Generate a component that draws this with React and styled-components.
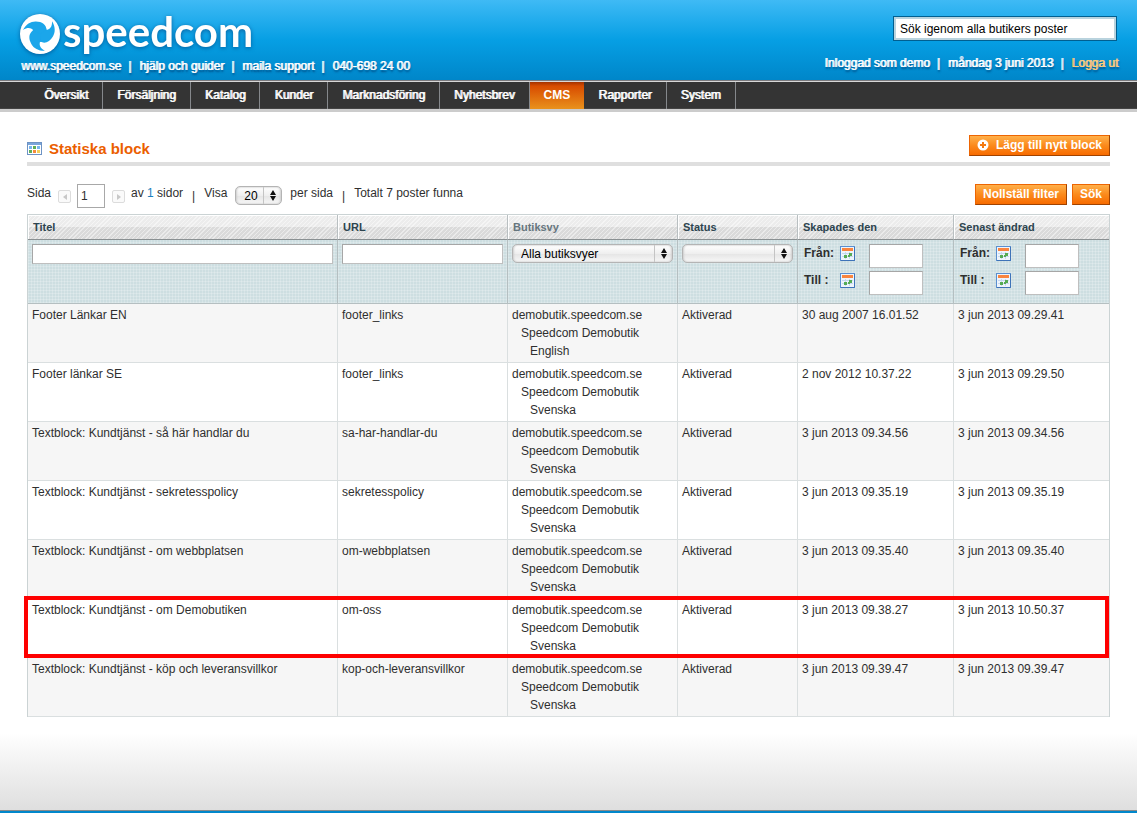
import React from 'react';
import styled, { createGlobalStyle, css } from 'styled-components';

const Global = createGlobalStyle`
  *, *::before, *::after { box-sizing: border-box; }
  body { margin: 0; background: #fff; color: #2f2f2f; font: 12px/18px "Liberation Sans", Arial, sans-serif; }
  input, select, button { font: inherit; color: inherit; margin: 0; }
  a { color: inherit; text-decoration: none; }
`;

const Page = styled.div`
  min-height: 100vh;
  display: flex;
  flex-direction: column;
`;

const Header = styled.header`
  display: flex;
  justify-content: space-between;
  height: 80px;
  padding: 10px 19px 0 19px;
  background: linear-gradient(#3fbaf5, #069fe4 50%, #0086c9);
  color: #fff;
  text-shadow: 1px 0 0 currentColor, 1px 2px 2px rgba(0, 40, 90, 0.7);
`;

const Brand = styled.a`
  display: flex;
  align-items: center;
  height: 47px;
  filter: drop-shadow(0 1px 2px rgba(0, 50, 110, 0.6));
  svg { display: block; flex: none; }
`;

const BrandName = styled.span`
  margin-left: 2px;
  font: 700 42px/42px Lato, sans-serif;
  padding-bottom: 6px;
  text-shadow: none;
`;

const HeaderLinks = styled.div`
  display: flex;
  padding-left: 2px;
  line-height: 18px;
`;

const Bar = styled.span`
  padding: 0 8px 0 7px;
`;

const Account = styled.div`
  display: flex;
  flex-direction: column;
  align-items: flex-end;
  padding-top: 6px;
`;

const GlobalSearch = styled.input`
  width: 224px;
  height: 25px;
  margin-right: 1px;
  padding: 0 6px;
  border: 1px solid #005f90;
  box-shadow: inset 0 0 0 2px #b9d3de;
  background: #fff;
  color: #000;
`;

const AccountLine = styled.div`
  display: flex;
  margin-top: 13px;
`;

const Logout = styled.a`
  color: #ffcb7d;
`;

const Nav = styled.nav`
  display: flex;
  height: 32px;
  padding-left: 30px;
  border-top: 1px solid #7b7b7f;
  border-bottom: 3px solid #ccc;
  background: #343434;
  box-shadow: inset 0 1px #d8d8d8, inset 0 -1px #444;
`;

const NavLink = styled.a`
  margin-top: 1px;
  padding: 4px 14px 0;
  border-right: 1px solid #85888c;
  color: #fff;
  text-shadow: 1px 0 0 currentColor;
  ${(p) => p.$active && css`
    border-right: 0;
    background: linear-gradient(#a33200, #d84c00 15%, #e9921c);
    font-weight: 700;
    text-shadow: none;
  `}
`;

const Main = styled.main`
  padding: 23px 27px 0;
`;

const TitleBar = styled.div`
  display: flex;
  justify-content: space-between;
  align-items: flex-start;
  height: 31px;
  border-bottom: 4px solid #dfdfdf;
`;

const Title = styled.h1`
  display: flex;
  align-items: center;
  gap: 7px;
  margin: 5px 0 0;
  color: #eb5e00;
  font-size: 15px;
  line-height: 18px;
  svg { margin-bottom: 2px; }
`;

const Button = styled.button`
  display: flex;
  align-items: center;
  gap: 7px;
  height: 21px;
  padding: 0 7px 2px;
  border: 1px solid;
  border-color: #ed6502 #a04300 #a04300 #ed6502;
  background: linear-gradient(#ffb04a, #fb8a1c 50%, #f76b00);
  color: #fff;
  font-weight: 700;
  white-space: nowrap;
  cursor: pointer;
`;

const Toolbar = styled.div`
  display: flex;
  justify-content: space-between;
  align-items: flex-start;
  height: 30px;
  margin-top: 18px;
`;

const Pager = styled.div`
  display: flex;
  align-items: flex-start;
  b { color: #1b7fbd; font-weight: 400; }
`;

const Step = styled.button`
  display: grid;
  place-items: center;
  width: 13px;
  height: 13px;
  margin: 6px 6px 0 7px;
  padding: 0;
  border: 1px solid #dcdcdc;
  border-radius: 2px;
  background: #fafafa;
`;

const PageInput = styled.input`
  width: 28px;
  height: 24px;
  padding: 0 3px;
  border: 1px solid #a8a8a8;
  background: #fff;
`;

const Divider = styled.span`
  padding: 3px 9px 0;
`;

const Actions = styled.div`
  display: flex;
  gap: 5px;
`;

const SelectFrame = styled.span`
  position: relative;
  display: block;
  width: ${(p) => (p.$compact ? '47px' : '100%')};
  height: 19px;
  margin: ${(p) => (p.$compact ? '2px 8px 0' : '0')};
  svg { position: absolute; right: 6px; top: 4px; pointer-events: none; }
`;

const Select = styled.select`
  display: block;
  width: 100%;
  height: 19px;
  padding: 0 20px 1px 8px;
  appearance: none;
  border: 1px solid #b4b4b4;
  border-radius: 5px;
  background:
    linear-gradient(#c4c4c4, #c4c4c4) right 17px top / 1px 100% no-repeat,
    linear-gradient(#fff, #efefef 50%, #e6e6e6 55%, #f8f8f8);
  box-shadow: inset 1px 0 2px #cfcfcf, inset -1px 0 2px #cfcfcf;
  color: #000;
`;

const Grid = styled.table`
  width: 100%;
  table-layout: fixed;
  border-collapse: separate;
  border-spacing: 0;
  border: solid #cbd3d4;
  border-width: 1px 1px 0;
`;

const Column = styled.col`
  width: ${(p) => p.$width}px;
`;

const HeadCell = styled.th`
  height: 25px;
  padding: 0 5px;
  border-right: 1px solid #b9bfc1;
  border-bottom: 1px solid #8a9092;
  background:
    repeating-linear-gradient(135deg, rgba(255, 255, 255, 0.45) 0 1px, transparent 1px 3px),
    linear-gradient(#ececec 48%, #dadada 48%);
  box-shadow: inset 1px 1px #fff;
  color: ${(p) => (p.$muted ? '#67767e' : '#2d444f')};
  font-size: 11px;
  text-align: left;
  &:last-child { border-right: 0; }
`;

const FilterCell = styled.td`
  height: 64px;
  padding: 4px;
  border-right: 1px solid #b5bfc1;
  border-bottom: 1px solid #b5bfc1;
  background:
    repeating-linear-gradient(0deg, rgba(255, 255, 255, 0.2) 0 1px, transparent 1px 3px),
    repeating-linear-gradient(90deg, rgba(255, 255, 255, 0.2) 0 1px, transparent 1px 3px),
    #cddee1;
  vertical-align: top;
  &:last-child { border-right: 0; }
`;

const FilterInput = styled.input`
  display: block;
  width: ${(p) => (p.$date ? '54px' : '100%')};
  height: ${(p) => (p.$date ? '24px' : '20px')};
  padding: 0 3px;
  border: 1px solid;
  border-color: #a6a6a6 #bfbfbf #bfbfbf #a6a6a6;
  background: #fff;
`;

const DateRow = styled.div`
  display: grid;
  grid-template-columns: 36px 29px 54px;
  align-items: start;
  padding-left: 2px;
  margin-bottom: 3px;
`;

const DateLabel = styled.label`
  font-weight: 700;
  white-space: nowrap;
`;

const IconButton = styled.button`
  width: 15px;
  height: 15px;
  margin-top: 2px;
  padding: 0;
  border: 0;
  background: none;
  svg { display: block; }
`;

const Row = styled.tr`
  position: relative;
  background: ${(p) => (p.$odd ? '#f6f6f6' : '#fff')};
  ${(p) => p.$marked && css`
    td:first-child::after {
      content: '';
      position: absolute;
      z-index: 1;
      inset: -3px 0 0 -4px;
      border: 4px solid #fe0000;
      pointer-events: none;
    }
  `}
`;

const Cell = styled.td`
  padding: 2px 4px;
  border-right: 1px solid #dadfe0;
  border-bottom: 1px solid #dadfe0;
  vertical-align: top;
  &:last-child { border-right: 0; }
`;

const StoreLine = styled.div`
  padding-left: ${(p) => p.$level * 9}px;
`;

const Footer = styled.footer`
  flex: 1;
  margin-top: 16px;
  min-height: 78px;
  background: linear-gradient(#fff, #dedede);
  border-bottom: 2px solid #0087cb;
  box-shadow: inset 0 -1px #8a8a8a;
`;

const LogoMark = () => (
  <svg width="42" height="42" viewBox="-21 -21 42 42" aria-hidden="true">
    <circle r="20" fill="#fff" />
    <g fill="#1ba6ea">
      <circle r="8" />
      {[-10, 110, 230].map((turn) => (
        <path
          key={turn}
          transform={`rotate(${turn})`}
          d="M-6 -5C-8 -8 -11 -9 -16 -7C-12 -12 -7 -14 -2 -13C4 -12 8 -8 7 -3L0 0Z"
        />
      ))}
    </g>
  </svg>
);

const GridIcon = () => (
  <svg width="15" height="13" viewBox="0 0 15 13" aria-hidden="true">
    <rect x="0.5" y="0.5" width="14" height="12" fill="#fff" stroke="#6d93c4" />
    <path d="M1 1h13v2H1z" fill="#7aa5da" />
    <path d="M2 4h3v3H2zM10 4h3v3h-3z" fill="#78b6ee" />
    <path d="M6 4h3v3H6zM2 8h3v3H2z" fill="#5fae57" />
    <path d="M6 8h3v3H6z" fill="#f58b3c" />
    <path d="M10 8h3v3h-3z" fill="#f3cf5a" />
  </svg>
);

const PlusIcon = () => (
  <svg width="12" height="12" viewBox="0 0 12 12" aria-hidden="true">
    <circle cx="6" cy="6" r="5.5" fill="#fff" />
    <path d="M6 3v6M3 6h6" stroke="#f47a10" strokeWidth="2" />
  </svg>
);

const CalendarIcon = () => (
  <svg width="15" height="15" viewBox="0 0 15 15" aria-hidden="true">
    <rect x="0.5" y="0.5" width="14" height="14" fill="#eef4fc" stroke="#5a8fd0" />
    <path d="M1 14.5h13.5V1" fill="none" stroke="#3f73b8" />
    <path d="M2 2h11v3H2z" fill="#f98540" />
    <path d="M2 7.5h11M2 10.5h11M5.5 6v7M9.5 6v7" stroke="#c6d8ef" />
    <path d="M9 7h3v3H9zM4 9h3v3H4zM8 9h2v2H8z" fill="#55ab55" />
  </svg>
);

const Arrows = () => (
  <svg width="6" height="11" viewBox="0 0 6 11" aria-hidden="true">
    <path d="M3 0l3 5H0zM3 11L0 6h6z" fill="#111" />
  </svg>
);

const Chevron = ({ next }) => (
  <svg width="4" height="6" viewBox="0 0 4 6" aria-hidden="true">
    <path d={next ? 'M0 0l4 3-4 3z' : 'M4 0L0 3l4 3z'} fill="#c8c8c8" />
  </svg>
);

const nav = ['Översikt', 'Försäljning', 'Katalog', 'Kunder', 'Marknadsföring', 'Nyhetsbrev', 'CMS', 'Rapporter', 'System'];

const rows = [
  ['Footer Länkar EN', 'footer_links', 'English', '30 aug 2007 16.01.52', '3 jun 2013 09.29.41'],
  ['Footer länkar SE', 'footer_links', 'Svenska', '2 nov 2012 10.37.22', '3 jun 2013 09.29.50'],
  ['Textblock: Kundtjänst - så här handlar du', 'sa-har-handlar-du', 'Svenska', '3 jun 2013 09.34.56', '3 jun 2013 09.34.56'],
  ['Textblock: Kundtjänst - sekretesspolicy', 'sekretesspolicy', 'Svenska', '3 jun 2013 09.35.19', '3 jun 2013 09.35.19'],
  ['Textblock: Kundtjänst - om webbplatsen', 'om-webbplatsen', 'Svenska', '3 jun 2013 09.35.40', '3 jun 2013 09.35.40'],
  ['Textblock: Kundtjänst - om Demobutiken', 'om-oss', 'Svenska', '3 jun 2013 09.38.27', '3 jun 2013 10.50.37'],
  ['Textblock: Kundtjänst - köp och leveransvillkor', 'kop-och-leveransvillkor', 'Svenska', '3 jun 2013 09.39.47', '3 jun 2013 09.39.47'],
];

const DateFilter = ({ name }) => (
  <>
    {[['from', 'Från:'], ['to', 'Till :']].map(([key, text]) => (
      <DateRow key={key}>
        <DateLabel htmlFor={`${name}-${key}`}>{text}</DateLabel>
        <IconButton type="button" aria-label="Välj datum"><CalendarIcon /></IconButton>
        <FilterInput $date id={`${name}-${key}`} />
      </DateRow>
    ))}
  </>
);

export default function App() {
  return (
    <Page>
      <Global />
      <Header>
        <div>
          <Brand href="#"><LogoMark /><BrandName>speedcom</BrandName></Brand>
          <HeaderLinks>
            <a href="#">www.speedcom.se</a><Bar>|</Bar>
            <a href="#">hjälp och guider</a><Bar>|</Bar>
            <a href="#">maila support</a><Bar>|</Bar>
            <span>040-698 24 00</span>
          </HeaderLinks>
        </div>
        <Account>
          <GlobalSearch aria-label="Sök" defaultValue="Sök igenom alla butikers poster" />
          <AccountLine>
            <span>Inloggad som demo</span><Bar>|</Bar>
            <span>måndag 3 juni 2013</span><Bar>|</Bar>
            <Logout href="#">Logga ut</Logout>
          </AccountLine>
        </Account>
      </Header>
      <Nav>
        {nav.map((n) => <NavLink key={n} href="#" $active={n === 'CMS'}>{n}</NavLink>)}
      </Nav>
      <Main>
        <TitleBar>
          <Title><GridIcon />Statiska block</Title>
          <Button type="button"><PlusIcon />Lägg till nytt block</Button>
        </TitleBar>
        <Toolbar>
          <Pager>
            <label htmlFor="page">Sida</label>
            <Step type="button" aria-label="Föregående"><Chevron /></Step>
            <PageInput id="page" defaultValue="1" />
            <Step type="button" aria-label="Nästa"><Chevron next /></Step>
            <span>av <b>1</b> sidor</span>
            <Divider>|</Divider>
            <label htmlFor="limit">Visa</label>
            <SelectFrame $compact>
              <Select id="limit"><option>20</option></Select>
              <Arrows />
            </SelectFrame>
            <span>per sida</span>
            <Divider>|</Divider>
            <span>Totalt 7 poster funna</span>
          </Pager>
          <Actions>
            <Button type="button">Nollställ filter</Button>
            <Button type="button">Sök</Button>
          </Actions>
        </Toolbar>
        <Grid>
          <colgroup>
            <col />
            <Column $width={170} />
            <Column $width={170} />
            <Column $width={120} />
            <Column $width={156} />
            <Column $width={155} />
          </colgroup>
          <thead>
            <tr>
              <HeadCell>Titel</HeadCell>
              <HeadCell>URL</HeadCell>
              <HeadCell $muted>Butiksvy</HeadCell>
              <HeadCell>Status</HeadCell>
              <HeadCell>Skapades den</HeadCell>
              <HeadCell>Senast ändrad</HeadCell>
            </tr>
            <tr>
              <FilterCell><FilterInput aria-label="Titel" /></FilterCell>
              <FilterCell><FilterInput aria-label="URL" /></FilterCell>
              <FilterCell>
                <SelectFrame>
                  <Select aria-label="Butiksvy"><option>Alla butiksvyer</option></Select>
                  <Arrows />
                </SelectFrame>
              </FilterCell>
              <FilterCell>
                <SelectFrame>
                  <Select aria-label="Status"><option></option></Select>
                  <Arrows />
                </SelectFrame>
              </FilterCell>
              <FilterCell><DateFilter name="created" /></FilterCell>
              <FilterCell><DateFilter name="updated" /></FilterCell>
            </tr>
          </thead>
          <tbody>
            {rows.map(([title, url, view, created, updated], i) => (
              <Row key={title} $odd={i % 2 === 0} $marked={url === 'om-oss'}>
                <Cell>{title}</Cell>
                <Cell>{url}</Cell>
                <Cell>
                  <StoreLine $level={0}>demobutik.speedcom.se</StoreLine>
                  <StoreLine $level={1}>Speedcom Demobutik</StoreLine>
                  <StoreLine $level={2}>{view}</StoreLine>
                </Cell>
                <Cell>Aktiverad</Cell>
                <Cell>{created}</Cell>
                <Cell>{updated}</Cell>
              </Row>
            ))}
          </tbody>
        </Grid>
      </Main>
      <Footer />
    </Page>
  );
}
